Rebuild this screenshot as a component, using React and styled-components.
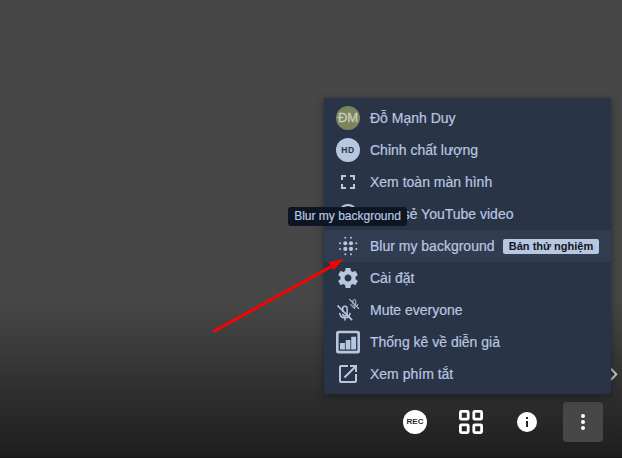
import React from 'react';
import styled, { createGlobalStyle } from 'styled-components';

const GlobalStyle = createGlobalStyle`
  * { box-sizing: border-box; }
  body { margin: 0; overflow: hidden; font-family: "Liberation Sans", Arial, sans-serif; }
`;

const Stage = styled.main`
  position: relative;
  display: flex;
  flex-direction: column;
  justify-content: flex-end;
  width: 622px;
  height: 458px;
  overflow: hidden;
  background: linear-gradient(to bottom, #474747 0, #474747 300px, #1e1e1e 457px);
  border-bottom: 1px solid #1b151b;
`;

const Toolbar = styled.nav`
  display: flex;
  justify-content: flex-end;
  gap: 16px;
  padding: 0 19px 15px;
`;

const ToolButton = styled.button`
  display: flex;
  align-items: center;
  justify-content: center;
  width: 40px;
  height: 40px;
  padding: 0;
  border: 0;
  border-radius: 4px;
  font-family: inherit;
  color: #fff;
  background: ${(p) => (p.$active ? '#474747' : 'transparent')};
`;

const Menu = styled.ul`
  position: absolute;
  top: 98px;
  left: 324px;
  width: 287px;
  margin: 0;
  padding: 4px 0;
  list-style: none;
  color: #b8c7e0;
  background: #2a3447;
  border-radius: 3px;
  box-shadow: 0 3px 9px rgba(18, 20, 30, 0.5), 0 0 1px rgba(18, 20, 30, 0.6);
`;

const MenuItem = styled.li`
  display: flex;
  align-items: center;
  height: 32px;
  padding: 0 12px;
  background: ${(p) => (p.$hovered ? '#323c50' : 'transparent')};
`;

const IconSlot = styled.span`
  display: flex;
  align-items: center;
  justify-content: center;
  flex: 0 0 24px;
  height: 24px;
  margin-right: 10px;
`;

const Label = styled.span`
  font-size: 14px;
  line-height: 20px;
  white-space: nowrap;
  -webkit-text-stroke: 0.2px currentColor;
`;

const Round = styled.span`
  display: flex;
  align-items: center;
  justify-content: center;
  width: 24px;
  height: 24px;
  border-radius: 50%;
  font-size: ${(p) => p.$size}px;
  font-weight: ${(p) => p.$weight || 400};
  letter-spacing: ${(p) => p.$spacing || 0}px;
  line-height: 24px;
  color: ${(p) => p.$ink};
  background: ${(p) => p.$fill};
`;

const Initials = styled(Round)`
  -webkit-text-stroke: 0.3px currentColor;
`;

const Badge = styled.span`
  margin-left: auto;
  width: 96px;
  height: 15px;
  border-radius: 2px;
  font-size: 11px;
  font-weight: 700;
  line-height: 15px;
  text-align: center;
  white-space: nowrap;
  color: #10151f;
  background: #b8c7e0;
`;

const Tooltip = styled.div`
  position: absolute;
  top: 207px;
  left: 288px;
  width: 119px;
  height: 19px;
  border-radius: 3px;
  font-size: 12px;
  line-height: 18px;
  text-align: center;
  white-space: nowrap;
  color: #b8c7e0;
  background: #0e1624;
  -webkit-text-stroke: 0.2px currentColor;
`;

const SideChevron = styled.svg`
  position: absolute;
  top: 367px;
  left: 607px;
`;

const Pointer = styled.svg`
  position: absolute;
  top: 0;
  left: 0;
  pointer-events: none;
`;

const Svg = ({ size = 24, children }) => (
  <svg width={size} height={size} viewBox="0 0 24 24" fill="currentColor">{children}</svg>
);

const FullscreenIcon = () => (
  <Svg><path d="M7 14H5v5h5v-2H7v-3zm-2-4h2V7h3V5H5v5zm12 7h-3v2h5v-5h-2v3zM14 5v2h3v3h2V5h-5z" /></Svg>
);

const PlayIcon = () => (
  <Svg><path d="M10 16.5l6-4.5-6-4.5v9zM12 2C6.48 2 2 6.48 2 12s4.48 10 10 10 10-4.48 10-10S17.52 2 12 2zm0 18c-4.41 0-8-3.59-8-8s3.59-8 8-8 8 3.59 8 8-3.59 8-8 8z" /></Svg>
);

const BLUR_X = [4, 9.3, 15, 20.3];
const BLUR_Y = [3.8, 9.2, 14.9, 20.2];
const isInner = (i) => i === 1 || i === 2;
const BlurIcon = () => (
  <Svg>
    {BLUR_Y.flatMap((y, r) => BLUR_X.map((x, c) => {
      if (!isInner(r) && !isInner(c)) return null;
      return <circle key={`${x}-${y}`} cx={x} cy={y} r={isInner(r) && isInner(c) ? 2.05 : 1} />;
    }))}
  </Svg>
);

const GearIcon = () => (
  <Svg><path d="M19.43 12.98c.04-.32.07-.64.07-.98s-.03-.66-.07-.98l2.11-1.65c.19-.15.24-.42.12-.64l-2-3.46c-.12-.22-.39-.3-.61-.22l-2.49 1c-.52-.4-1.08-.73-1.69-.98l-.38-2.65C14.46 2.18 14.25 2 14 2h-4c-.25 0-.46.18-.49.42l-.38 2.65c-.61.25-1.17.59-1.69.98l-2.49-1c-.23-.09-.49 0-.61.22l-2 3.46c-.13.22-.07.49.12.64l2.11 1.65c-.04.32-.07.65-.07.98s.03.66.07.98l-2.11 1.65c-.19.15-.24.42-.12.64l2 3.46c.12.22.39.3.61.22l2.49-1c.52.4 1.08.73 1.69.98l.38 2.65c.03.24.24.42.49.42h4c.25 0 .46-.18.49-.42l.38-2.65c.61-.25 1.17-.59 1.69-.98l2.49 1c.23.09.49 0 .61-.22l2-3.46c.12-.22.07-.49-.12-.64l-2.11-1.65zM12 15.5c-1.93 0-3.5-1.57-3.5-3.5s1.57-3.5 3.5-3.5 3.5 1.57 3.5 3.5-1.57 3.5-3.5 3.5z" /></Svg>
);

const MutedMic = () => (
  <g fill="none" stroke="currentColor">
    <path d="M5.8 7.8V4.2a2.2 2.2 0 0 1 4.4 0v5.2a2.2 2.2 0 0 1-4.4 0M2.8 8.6c.2 3 2.3 4.9 5.2 4.9s5-1.9 5.2-4.9M8 13.5v2.8" strokeWidth="1.5" />
    <path d="M.6 1.2l14.6 14.6" strokeWidth="1.7" />
  </g>
);

const MuteEveryoneIcon = () => (
  <Svg>
    <g transform="translate(.9 6.3)"><MutedMic /></g>
    <g transform="translate(13 .4) scale(.66)"><MutedMic /></g>
  </Svg>
);

const StatsIcon = () => (
  <Svg>
    <path fillRule="evenodd" d="M2.5.8h19A2.5 2.5 0 0 1 24 3.3v17.6a2.5 2.5 0 0 1-2.5 2.5h-19A2.5 2.5 0 0 1 0 20.9V3.3A2.5 2.5 0 0 1 2.5.8zM3.3 3.2a.7.7 0 0 0-.7.7v16.2a.7.7 0 0 0 .7.7h17.4a.7.7 0 0 0 .7-.7V3.9a.7.7 0 0 0-.7-.7z" />
    <path d="M4 13h4.9v6.6H4zM9.7 10h4.7v9.6H9.7zM15.2 6.8h4.9v12.8h-4.9z" />
  </Svg>
);

const ExternalIcon = () => (
  <Svg><path d="M19 19H5V5h7V3H5a2 2 0 0 0-2 2v14a2 2 0 0 0 2 2h14c1.1 0 2-.9 2-2v-7h-2v7zM14 3v2h3.59l-9.83 9.83 1.41 1.41L19 6.41V10h2V3h-7z" /></Svg>
);

const TilesIcon = () => (
  <Svg>
    <g fill="none" stroke="currentColor" strokeWidth="2.8">
      {[1.4, 14.8].flatMap((y) => [1.4, 14.8].map((x) => (
        <rect key={`${x}-${y}`} x={x} y={y} width="7.8" height="7.8" rx="1" />
      )))}
    </g>
  </Svg>
);

const InfoIcon = () => (
  <Svg><path d="M12 2a10 10 0 1 0 0 20 10 10 0 0 0 0-20zm1 15h-2v-6h2v6zm0-8h-2V7h2v2z" /></Svg>
);

const MoreIcon = () => (
  <Svg><circle cx="12" cy="6" r="2" /><circle cx="12" cy="12" r="2" /><circle cx="12" cy="18" r="2" /></Svg>
);

const ITEMS = [
  { label: 'Đỗ Mạnh Duy', icon: <Initials $size={13} $ink="#c9d0b8" $fill="#7a8560">ĐM</Initials> },
  { label: 'Chỉnh chất lượng', icon: <Round $size={8.5} $weight={700} $spacing={0.5} $ink="#2a3447" $fill="#b8c7e0">HD</Round> },
  { label: 'Xem toàn màn hình', icon: <FullscreenIcon /> },
  { label: 'Chia sẻ YouTube video', icon: <PlayIcon /> },
  { label: 'Blur my background', icon: <BlurIcon />, badge: 'Bản thử nghiệm', hovered: true },
  { label: 'Cài đặt', icon: <GearIcon /> },
  { label: 'Mute everyone', icon: <MuteEveryoneIcon /> },
  { label: 'Thống kê về diễn giả', icon: <StatsIcon /> },
  { label: 'Xem phím tắt', icon: <ExternalIcon /> },
];

export default function App() {
  return (
    <>
      <GlobalStyle />
      <Stage>
        <SideChevron width="14" height="14" viewBox="0 0 14 14" fill="none" stroke="#c8c8c8" strokeWidth="2">
          <path d="M4 1.8l5.3 5.5L4 12.8" />
        </SideChevron>
        <Toolbar>
          <ToolButton><Round $size={8} $weight={700} $ink="#2b2b2b" $fill="#fff">REC</Round></ToolButton>
          <ToolButton><TilesIcon /></ToolButton>
          <ToolButton><InfoIcon /></ToolButton>
          <ToolButton $active><MoreIcon /></ToolButton>
        </Toolbar>
        <Menu>
          {ITEMS.map((item) => (
            <MenuItem key={item.label} $hovered={item.hovered}>
              <IconSlot>{item.icon}</IconSlot>
              <Label>{item.label}</Label>
              {item.badge && <Badge>{item.badge}</Badge>}
            </MenuItem>
          ))}
        </Menu>
        <Tooltip>Blur my background</Tooltip>
        <Pointer width="622" height="458" viewBox="0 0 622 458">
          <path d="M214.5 331L333 265.5" stroke="#f00" strokeWidth="2.8" strokeLinecap="round" />
          <path d="M343.5 259L333.5 270.2l-1.8-4-3.6-3.6z" fill="#f00" />
        </Pointer>
      </Stage>
    </>
  );
}
